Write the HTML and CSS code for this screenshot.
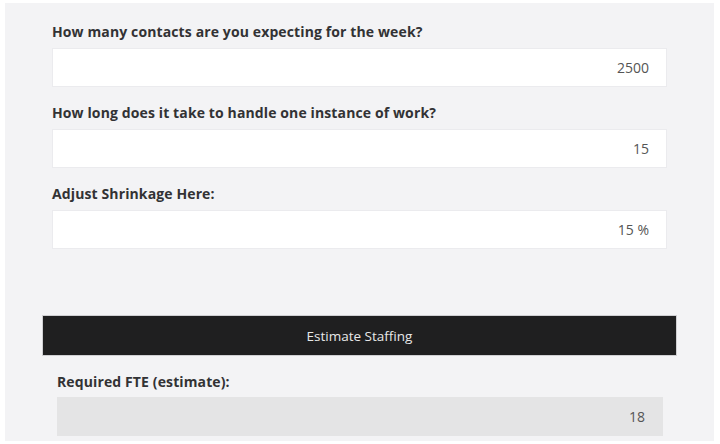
FILE: index.html
```html
<!DOCTYPE html>
<html>
<head>
<meta charset="utf-8">
<link rel="stylesheet" href="styles.css">
</head>
<body>
<div class="panel">
  <div class="field">
    <label class="label">How many contacts are you expecting for the week?</label>
    <div class="input">2500</div>
  </div>
  <div class="field">
    <label class="label">How long does it take to handle one instance of work?</label>
    <div class="input">15</div>
  </div>
  <div class="field">
    <label class="label">Adjust Shrinkage Here:</label>
    <div class="input">15 %</div>
  </div>
  <button class="btn">Estimate Staffing</button>
  <div class="result">
    <label class="label">Required FTE (estimate):</label>
    <div class="output">18</div>
  </div>
</div>
</body>
</html>
```

FILE: styles.css
```css
html, body {
  margin: 0;
  padding: 0;
  background: #ffffff;
}
body {
  font-family: "Open Sans", "Noto Sans", sans-serif;
  color: #333333;
}
.panel {
  margin: 3px 6px 0 5px;
  min-height: 438px;
  box-sizing: border-box;
  background: #f3f3f5;
  padding: 19px 47px 0 47px;
  display: flex;
  flex-direction: column;
}
.panel > * {
  flex-shrink: 0;
}
.field {
  display: flex;
  flex-direction: column;
}
.label {
  display: block;
  font-weight: 700;
  font-size: 14px;
  line-height: 19px;
  letter-spacing: 0.12px;
  color: #323234;
  margin: 0 0 7px 0;
}
.field + .field .label {
  margin-top: 16px;
}
.input {
  height: 39px;
  flex-shrink: 0;
  box-sizing: border-box;
  background: #ffffff;
  border: 1px solid #ebebee;
  font-size: 14px;
  line-height: 37px;
  text-align: right;
  padding-right: 17px;
  color: #555555;
}
.btn {
  margin: 66px -10px 0 -10px;
  height: 41px;
  background: #1f1f20;
  border: 1px solid #cfcfd2;
  color: #e8e8e8;
  font-family: "Open Sans", "Noto Sans", sans-serif;
  font-size: 13.5px;
  padding: 0;
}
.result {
  margin: 16px 4px 0 5px;
  display: flex;
  flex-direction: column;
}
.result .label {
  margin: 0 0 6px 0;
}
.output {
  height: 39px;
  flex-shrink: 0;
  background: #e4e4e5;
  font-size: 14px;
  line-height: 39px;
  text-align: right;
  padding-right: 18px;
  color: #555555;
}
```
